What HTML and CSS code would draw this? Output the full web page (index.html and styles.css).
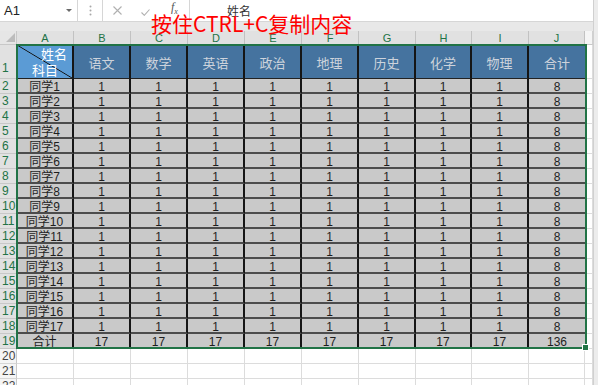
FILE: index.html
```html
<!DOCTYPE html>
<html lang="zh-CN">
<head>
<meta charset="utf-8">
<title>Sheet</title>
<link rel="stylesheet" href="styles.css">
</head>
<body>
<div class="screen">
  <div class="app">
    <div class="fbar">
      <div class="namebox"><span class="ref">A1</span><span class="caret"></span></div>
      <div class="grip"><svg width="3" height="11" viewBox="0 0 3 11"><circle cx="1.5" cy="1.5" r="1" fill="#a8a8a8"/><circle cx="1.5" cy="5.5" r="1" fill="#a8a8a8"/><circle cx="1.5" cy="9.5" r="1" fill="#a8a8a8"/></svg></div>
      <div class="btns">
        <svg class="ic-x" width="9" height="9" viewBox="0 0 9 9"><path d="M0.5 0.5 L8.5 8.5 M8.5 0.5 L0.5 8.5" stroke="#b0b0b0" stroke-width="1.1" fill="none"/></svg>
        <svg class="ic-ok" width="9" height="7" viewBox="0 0 9 7"><path d="M0.5 3.5 L3.3 6.3 L8.5 0.5" stroke="#b0b0b0" stroke-width="1.1" fill="none"/></svg>
        <span class="fx"><i>f</i><sub>x</sub></span>
      </div>
      <div class="formula">姓名</div>
    </div>
    <div class="band"></div>
    <div class="sheet">
      <div class="corner"><span class="tri"></span></div>
      <div class="ch s">A</div><div class="ch s">B</div><div class="ch s">C</div><div class="ch s">D</div><div class="ch s">E</div><div class="ch s">F</div><div class="ch s">G</div><div class="ch s">H</div><div class="ch s">I</div><div class="ch s">J</div><div class="ch"></div>

      <div class="rh s r1">1</div>
      <div class="a1"><span class="a1-top">姓名</span><span class="a1-bot">科目</span></div>
      <div class="h">语文</div><div class="h">数学</div><div class="h">英语</div><div class="h">政治</div><div class="h">地理</div><div class="h">历史</div><div class="h">化学</div><div class="h">物理</div><div class="h l">合计</div><div class="e"></div>

      <div class="rh s">2</div><div class="c">同学1</div><div class="c">1</div><div class="c">1</div><div class="c">1</div><div class="c">1</div><div class="c">1</div><div class="c">1</div><div class="c">1</div><div class="c">1</div><div class="c l">8</div><div class="e"></div>
      <div class="rh s">3</div><div class="c">同学2</div><div class="c">1</div><div class="c">1</div><div class="c">1</div><div class="c">1</div><div class="c">1</div><div class="c">1</div><div class="c">1</div><div class="c">1</div><div class="c l">8</div><div class="e"></div>
      <div class="rh s">4</div><div class="c">同学3</div><div class="c">1</div><div class="c">1</div><div class="c">1</div><div class="c">1</div><div class="c">1</div><div class="c">1</div><div class="c">1</div><div class="c">1</div><div class="c l">8</div><div class="e"></div>
      <div class="rh s">5</div><div class="c">同学4</div><div class="c">1</div><div class="c">1</div><div class="c">1</div><div class="c">1</div><div class="c">1</div><div class="c">1</div><div class="c">1</div><div class="c">1</div><div class="c l">8</div><div class="e"></div>
      <div class="rh s">6</div><div class="c">同学5</div><div class="c">1</div><div class="c">1</div><div class="c">1</div><div class="c">1</div><div class="c">1</div><div class="c">1</div><div class="c">1</div><div class="c">1</div><div class="c l">8</div><div class="e"></div>
      <div class="rh s">7</div><div class="c">同学6</div><div class="c">1</div><div class="c">1</div><div class="c">1</div><div class="c">1</div><div class="c">1</div><div class="c">1</div><div class="c">1</div><div class="c">1</div><div class="c l">8</div><div class="e"></div>
      <div class="rh s">8</div><div class="c">同学7</div><div class="c">1</div><div class="c">1</div><div class="c">1</div><div class="c">1</div><div class="c">1</div><div class="c">1</div><div class="c">1</div><div class="c">1</div><div class="c l">8</div><div class="e"></div>
      <div class="rh s">9</div><div class="c">同学8</div><div class="c">1</div><div class="c">1</div><div class="c">1</div><div class="c">1</div><div class="c">1</div><div class="c">1</div><div class="c">1</div><div class="c">1</div><div class="c l">8</div><div class="e"></div>
      <div class="rh s">10</div><div class="c">同学9</div><div class="c">1</div><div class="c">1</div><div class="c">1</div><div class="c">1</div><div class="c">1</div><div class="c">1</div><div class="c">1</div><div class="c">1</div><div class="c l">8</div><div class="e"></div>
      <div class="rh s">11</div><div class="c">同学10</div><div class="c">1</div><div class="c">1</div><div class="c">1</div><div class="c">1</div><div class="c">1</div><div class="c">1</div><div class="c">1</div><div class="c">1</div><div class="c l">8</div><div class="e"></div>
      <div class="rh s">12</div><div class="c">同学11</div><div class="c">1</div><div class="c">1</div><div class="c">1</div><div class="c">1</div><div class="c">1</div><div class="c">1</div><div class="c">1</div><div class="c">1</div><div class="c l">8</div><div class="e"></div>
      <div class="rh s">13</div><div class="c">同学12</div><div class="c">1</div><div class="c">1</div><div class="c">1</div><div class="c">1</div><div class="c">1</div><div class="c">1</div><div class="c">1</div><div class="c">1</div><div class="c l">8</div><div class="e"></div>
      <div class="rh s">14</div><div class="c">同学13</div><div class="c">1</div><div class="c">1</div><div class="c">1</div><div class="c">1</div><div class="c">1</div><div class="c">1</div><div class="c">1</div><div class="c">1</div><div class="c l">8</div><div class="e"></div>
      <div class="rh s">15</div><div class="c">同学14</div><div class="c">1</div><div class="c">1</div><div class="c">1</div><div class="c">1</div><div class="c">1</div><div class="c">1</div><div class="c">1</div><div class="c">1</div><div class="c l">8</div><div class="e"></div>
      <div class="rh s">16</div><div class="c">同学15</div><div class="c">1</div><div class="c">1</div><div class="c">1</div><div class="c">1</div><div class="c">1</div><div class="c">1</div><div class="c">1</div><div class="c">1</div><div class="c l">8</div><div class="e"></div>
      <div class="rh s">17</div><div class="c">同学16</div><div class="c">1</div><div class="c">1</div><div class="c">1</div><div class="c">1</div><div class="c">1</div><div class="c">1</div><div class="c">1</div><div class="c">1</div><div class="c l">8</div><div class="e"></div>
      <div class="rh s">18</div><div class="c">同学17</div><div class="c">1</div><div class="c">1</div><div class="c">1</div><div class="c">1</div><div class="c">1</div><div class="c">1</div><div class="c">1</div><div class="c">1</div><div class="c l">8</div><div class="e"></div>
      <div class="rh s">19</div><div class="c">合计</div><div class="c">17</div><div class="c">17</div><div class="c">17</div><div class="c">17</div><div class="c">17</div><div class="c">17</div><div class="c">17</div><div class="c">17</div><div class="c l">136</div><div class="e"></div>

      <div class="rh">20</div><div class="e"></div><div class="e"></div><div class="e"></div><div class="e"></div><div class="e"></div><div class="e"></div><div class="e"></div><div class="e"></div><div class="e"></div><div class="e"></div><div class="e"></div>
      <div class="rh">21</div><div class="e"></div><div class="e"></div><div class="e"></div><div class="e"></div><div class="e"></div><div class="e"></div><div class="e"></div><div class="e"></div><div class="e"></div><div class="e"></div><div class="e"></div>
      <div class="rh">22</div><div class="e"></div><div class="e"></div><div class="e"></div><div class="e"></div><div class="e"></div><div class="e"></div><div class="e"></div><div class="e"></div><div class="e"></div><div class="e"></div><div class="e"></div>

      <div class="selection"><span class="handle"></span></div>
    </div>
  </div>
  <div class="vscroll"></div>
  <div class="hint">按住CTRL+C复制内容</div>
</div>
</body>
</html>
```

FILE: styles.css
```css
* { box-sizing: border-box; }
html, body { margin: 0; padding: 0; }
body {
  width: 598px;
  height: 385px;
  overflow: hidden;
  background: #fff;
  font-family: "Liberation Sans", "Noto Sans CJK SC", sans-serif;
  font-size: 12px;
  color: #222;
}
.screen {
  position: relative;
  display: flex;
  width: 598px;
  height: 385px;
  overflow: hidden;
}
.app {
  width: 593px;
  flex: none;
  display: flex;
  flex-direction: column;
}
.vscroll {
  flex: 1;
  background: #ececec;
  border-left: 1px solid #d0d0d0;
}

/* formula bar */
.fbar {
  height: 22px;
  flex: none;
  display: flex;
  background: #fff;
  border-bottom: 1px solid #d6d6d6;
}
.namebox {
  width: 78px;
  display: flex;
  align-items: center;
  justify-content: space-between;
  padding: 0 5px 0 4px;
  border-right: 1px solid #d6d6d6;
  font-size: 13px;
  color: #222;
}
.caret {
  width: 0;
  height: 0;
  border-left: 3px solid transparent;
  border-right: 3px solid transparent;
  border-top: 3px solid #6a6a6a;
}
.grip {
  width: 25px;
  display: flex;
  align-items: center;
  justify-content: center;
  border-right: 1px solid #d6d6d6;
}
.btns {
  width: 87px;
  display: flex;
  align-items: center;
  border-right: 1px solid #d6d6d6;
}
.ic-x { margin-left: 10px; }
.ic-ok { margin-left: 19px; margin-top: 3px; }
.fx {
  margin-left: 21px;
  font-family: "Liberation Serif", serif;
  font-size: 12px;
  color: #555;
  line-height: 1;
  margin-top: -4px;
}
.fx sub { font-size: 8px; font-style: italic; }
.formula {
  flex: 1;
  display: flex;
  align-items: center;
  padding-left: 37px;
  font-family: "Noto Sans CJK SC", sans-serif;
  font-size: 12px;
  color: #333;
}
.band {
  height: 9px;
  flex: none;
  background: #e8e8e8;
}

/* sheet grid */
.sheet {
  position: relative;
  display: grid;
  grid-template-columns: 17px repeat(7, 57px) 56px 57px 56px 1fr;
  grid-template-rows: 14px 34px;
  grid-auto-rows: 15px;
}
.corner {
  position: relative;
  background: #e6e6e6;
  border-right: 1px solid #c8c8c8;
  border-bottom: 1px solid #c8c8c8;
}
.tri {
  position: absolute;
  right: 1px;
  bottom: 2px;
  width: 0;
  height: 0;
  border-left: 9px solid transparent;
  border-bottom: 9px solid #bcbcbc;
}
.ch {
  background: #f5f5f5;
  border-right: 1px solid #d0d0d0;
  border-bottom: 1px solid #c8c8c8;
  text-align: center;
  font-size: 11px;
  line-height: 14px;
  color: #444;
}
.ch.s {
  background: #e1e1e1;
  border-right-color: #c2c2c2;
  color: #217346;
}
.rh {
  background: #f5f5f5;
  border-right: 1px solid #c8c8c8;
  border-bottom: 1px solid #d6d6d6;
  padding-left: 2px;
  font-size: 12px;
  line-height: 15px;
  color: #444;
}
.rh.s {
  background: #e1e1e1;
  border-bottom-color: #c8c8c8;
  color: #217346;
}
.rh.r1 {
  display: flex;
  align-items: flex-end;
  padding-bottom: 2px;
}

/* row 1 headers */
.a1 {
  display: flex;
  flex-direction: column;
  justify-content: space-between;
  padding: 1px 5px 1px 15px;
  background: linear-gradient(to top right, #5b9bd5 calc(50% - 0.8px), #111 50%, #5b9bd5 calc(50% + 0.8px));
  border-right: 2px solid #151515;
  border-bottom: 1px solid #222;
  font-family: "Noto Sans CJK SC", sans-serif;
  font-size: 13px;
  line-height: 15px;
  color: #fff;
}
.a1-top { align-self: flex-end; }
.a1-bot { align-self: flex-start; }
.h {
  display: flex;
  align-items: center;
  justify-content: center;
  padding-top: 2px;
  background: #45739f;
  border-right: 2px solid #151515;
  border-bottom: 1px solid #222;
  font-family: "Noto Sans CJK SC", sans-serif;
  font-size: 13px;
  color: #cdd3dc;
}

/* data cells */
.c {
  background: #c9c9c9;
  border-right: 2px solid #161616;
  border-bottom: 2px solid #4c4c4c;
  text-align: center;
  padding-top: 2px;
  line-height: 12px;
  color: #1e1e1e;
}
.l { border-right: none; }
.e {
  background: #fff;
  border-right: 1px solid #dcdcdc;
  border-bottom: 1px solid #dcdcdc;
}

/* selection */
.selection {
  position: absolute;
  left: 16px;
  top: 13px;
  width: 571px;
  height: 305px;
  border: 2px solid #217346;
  pointer-events: none;
}
.handle {
  position: absolute;
  right: -4px;
  bottom: -4px;
  width: 7px;
  height: 7px;
  background: #217346;
  border: 1px solid #fff;
}

/* overlay hint */
.hint {
  position: absolute;
  left: 151px;
  top: 13px;
  font-family: "Noto Sans CJK SC", sans-serif;
  font-size: 21px;
  line-height: 1;
  color: #ff0000;
  white-space: nowrap;
}
```
